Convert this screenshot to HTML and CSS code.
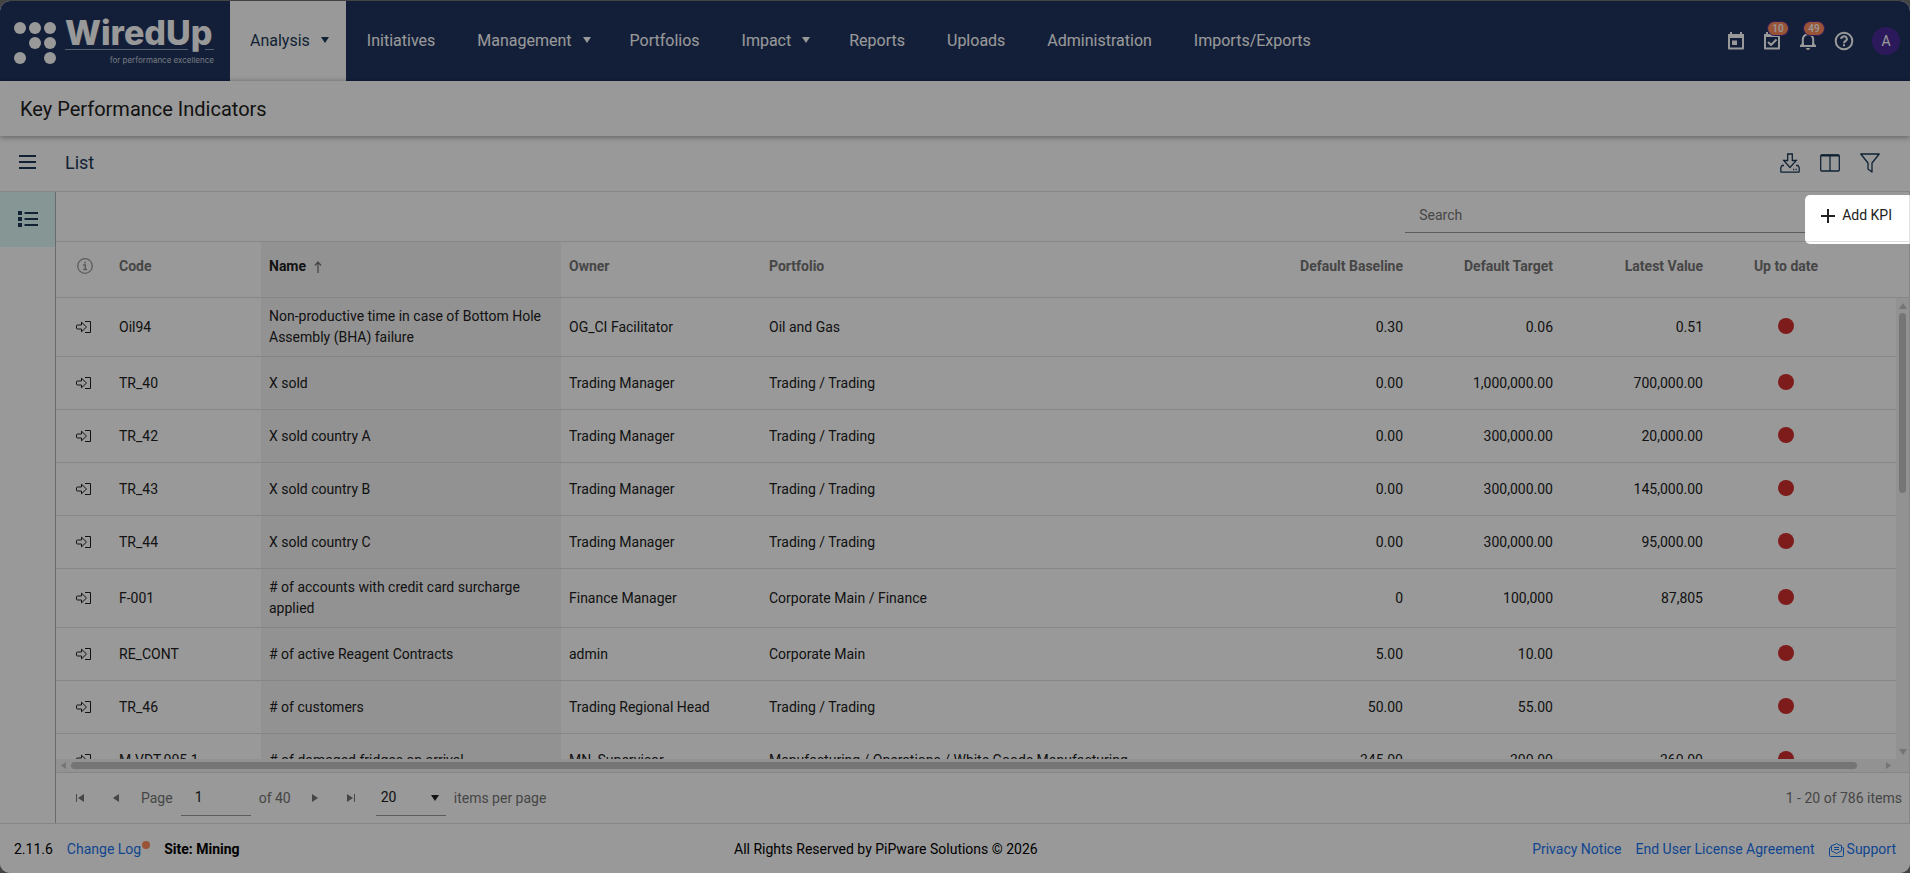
FILE: index.html
```html
<!DOCTYPE html>
<html lang="en">
  <head>
    <meta charset="UTF-8" />
    <meta name="viewport" content="width=device-width, initial-scale=1.0" />
    <title>Key Performance Indicators</title>
    <link rel="stylesheet" href="styles.css">
  </head>
  <body>
    <svg class="sprite" width="0" height="0">
      <symbol id="open" viewBox="0 0 16 14">
        <path d="M1.5 5h4V2.200L10.500 7l-5 4.800V9h-4a1 1 0 0 1-1-1V6a1 1 0 0 1 1-1zM9 1.500h5.500v11H9" fill="none" stroke="currentColor" stroke-width="1" />
      </symbol>
      <symbol id="caret" viewBox="0 0 8 6">
        <path d="M0 0h8L4 6z" fill="currentColor" />
      </symbol>
    </svg>

    <div class="app">
      <header class="topbar">
        <a class="logo" href="#" aria-label="WiredUp">
          <svg class="logo-dots" width="42" height="42" viewBox="0 0 42 42" fill="#fff">
            <circle cx="6" cy="6" r="6" /><circle cx="21" cy="6" r="6" /><circle cx="36" cy="6" r="6" />
            <circle cx="21" cy="21" r="6" /><circle cx="36" cy="21" r="6" />
            <circle cx="6" cy="36" r="6" /><circle cx="36" cy="36" r="6" />
          </svg>
          <span class="logo-text">
            <span class="logo-name">WiredUp</span>
            <span class="logo-rule"><i></i><i></i></span>
            <span class="logo-tag">for performance excellence</span>
          </span>
        </a>
        <nav class="menu">
          <a class="drop active" href="#">Analysis<svg class="caret"><use href="#caret" /></svg></a>
          <a href="#">Initiatives</a>
          <a class="drop" href="#">Management<svg class="caret"><use href="#caret" /></svg></a>
          <a href="#">Portfolios</a>
          <a class="drop" href="#">Impact<svg class="caret"><use href="#caret" /></svg></a>
          <a href="#">Reports</a>
          <a href="#">Uploads</a>
          <a href="#">Administration</a>
          <a href="#">Imports/Exports</a>
        </nav>
        <div class="user-tools">
          <button aria-label="Calendar">
            <svg width="18" height="20" viewBox="0 0 18 20"><path d="M2 4h14v13.500H2z" fill="none" stroke="currentColor" stroke-width="2" stroke-linejoin="round" /><path d="M1 3h16v4H1zM3 1h2v3H3zM13 1h2v3h-2zM5 9.500h5v4.500H5z" fill="currentColor" /></svg>
          </button>
          <button aria-label="Tasks">
            <svg width="18" height="20" viewBox="0 0 18 20"><path d="M2 4h14v13.500H2zM5 11l3 3 5.500-5.500" fill="none" stroke="currentColor" stroke-width="2" stroke-linejoin="round" /><path d="M1 3h16v3H1zM3 1h2v3H3zM13 1h2v3h-2z" fill="currentColor" /></svg>
            <span class="badge">10</span>
          </button>
          <button aria-label="Notifications">
            <svg width="18" height="20" viewBox="0 0 18 20"><path d="M1 15h16M3.800 15V8.500a5.200 5.200 0 0 1 10.400 0V15" fill="none" stroke="currentColor" stroke-width="2" /><path d="M1 16v-1.500L3.500 12h11l2.500 2.500V16zM7 17h4a2 2 0 0 1-4 0z" fill="currentColor" /><path d="M5 8.500h8V14H5z" fill="#20355f" /></svg>
            <span class="badge">49</span>
          </button>
          <button aria-label="Help">
            <svg width="20" height="20" viewBox="0 0 20 20" fill="none" stroke="currentColor" stroke-width="2"><circle cx="10" cy="10" r="8.300" /><path d="M7.200 8a2.800 2.500 0 1 1 4.300 2c-1 .700-1.500 1-1.500 2.200M10 13.300v2" /></svg>
          </button>
          <button class="avatar">A</button>
        </div>
      </header>

      <div class="page-title"><h1>Key Performance Indicators</h1></div>

      <div class="toolbar">
        <button class="menu-btn" aria-label="Menu">
          <svg width="18" height="16" viewBox="0 0 18 16"><path d="M0 1h17M0 7h17M0 13h17" stroke="currentColor" stroke-width="2" /></svg>
        </button>
        <h2>List</h2>
        <div class="toolbar-icons">
          <button aria-label="Export">
            <svg width="20" height="20" viewBox="0 0 20 20" fill="none" stroke="currentColor" stroke-width="1.300"><path d="M7.700 1h4.600v6.500h4L10 14.500 3.700 7.500h4zM4 12.500H2l-1.200 2.200v3.800a.700.700 0 0 0 .700.700h17a.700.700 0 0 0 .700-.700v-3.800L18 12.500h-2" /><path d="M13 16.500h1.200M15.500 16.500h1.200" /></svg>
          </button>
          <button aria-label="Columns">
            <svg width="20" height="20" viewBox="0 0 20 20" fill="none" stroke="currentColor" stroke-width="1.300"><rect x=".7" y="2" width="18.600" height="16" rx="1" /><path d="M10 2v16" /><path d="M1 2.600h18" stroke-width="2" /></svg>
          </button>
          <button aria-label="Filter">
            <svg width="20" height="20" viewBox="0 0 20 20" fill="none" stroke="currentColor" stroke-width="1.300"><path d="M.8 1h18.400L12 10v9l-4-3v-6z" stroke-linejoin="round" /></svg>
          </button>
        </div>
      </div>

      <div class="main">
        <aside class="sidebar">
          <button class="side-item" aria-label="List">
            <svg width="20" height="18" viewBox="0 0 20 18"><path d="M6.500 3H20M6.500 9H20M6.500 15H20" stroke="currentColor" stroke-width="2" /><path d="M0 1h4v4H0zM0 7h4v4H0zM0 13h4v4H0z" fill="currentColor" /></svg>
          </button>
        </aside>

        <section class="grid">
          <div class="grid-tools">
            <input class="search" type="text" placeholder="Search" aria-label="Search" />
            <div class="add-wrap">
              <button class="add-btn">
                <svg width="14" height="14" viewBox="0 0 14 14"><path d="M7 0v14M0 7h14" stroke="currentColor" stroke-width="2" /></svg>
                Add KPI
              </button>
              <div class="spotlight"></div>
            </div>
          </div>

          <div class="grid-content">
            <div class="viewport">
              <table>
                <colgroup>
                  <col class="c-icon" /><col class="c-code" /><col class="c-name" /><col class="c-owner" /><col class="c-portfolio" />
                  <col class="c-num" /><col class="c-num" /><col class="c-num" /><col class="c-status" /><col />
                </colgroup>
                <thead>
                  <tr>
                    <th class="icon">
                      <svg width="16" height="16" viewBox="0 0 16 16" fill="none" stroke="#9a9a9a"><circle cx="8" cy="8" r="7.300" stroke-width="1.300" /><path d="M6 7h2.300v4.500M6 11.500h4.200M8 3.800v1.700" stroke-width="1.500" /></svg>
                    </th>
                    <th>Code</th>
                    <th class="sorted">Name<svg class="sort" width="8" height="12" viewBox="0 0 8 12"><path d="M4 12V1M1 4.500l3-3.500 3 3.500" fill="none" stroke="#757575" stroke-width="1.300" /></svg></th>
                    <th>Owner</th>
                    <th>Portfolio</th>
                    <th class="num">Default Baseline</th>
                    <th class="num">Default Target</th>
                    <th class="num">Latest Value</th>
                    <th class="status">Up to date</th>
                    <th></th>
                  </tr>
                </thead>
                <tbody>
                  <tr>
                    <td class="icon"><svg><use href="#open" /></svg></td>
                    <td>Oil94</td>
                    <td class="sorted">Non-productive time in case of Bottom Hole Assembly (BHA) failure</td>
                    <td>OG_CI Facilitator</td>
                    <td>Oil and Gas</td>
                    <td class="num">0.30</td>
                    <td class="num">0.06</td>
                    <td class="num">0.51</td>
                    <td class="status"><span class="dot"></span></td>
                    <td></td>
                  </tr>
                  <tr>
                    <td class="icon"><svg><use href="#open" /></svg></td>
                    <td>TR_40</td>
                    <td class="sorted">X sold</td>
                    <td>Trading Manager</td>
                    <td>Trading / Trading</td>
                    <td class="num">0.00</td>
                    <td class="num">1,000,000.00</td>
                    <td class="num">700,000.00</td>
                    <td class="status"><span class="dot"></span></td>
                    <td></td>
                  </tr>
                  <tr>
                    <td class="icon"><svg><use href="#open" /></svg></td>
                    <td>TR_42</td>
                    <td class="sorted">X sold country A</td>
                    <td>Trading Manager</td>
                    <td>Trading / Trading</td>
                    <td class="num">0.00</td>
                    <td class="num">300,000.00</td>
                    <td class="num">20,000.00</td>
                    <td class="status"><span class="dot"></span></td>
                    <td></td>
                  </tr>
                  <tr>
                    <td class="icon"><svg><use href="#open" /></svg></td>
                    <td>TR_43</td>
                    <td class="sorted">X sold country B</td>
                    <td>Trading Manager</td>
                    <td>Trading / Trading</td>
                    <td class="num">0.00</td>
                    <td class="num">300,000.00</td>
                    <td class="num">145,000.00</td>
                    <td class="status"><span class="dot"></span></td>
                    <td></td>
                  </tr>
                  <tr>
                    <td class="icon"><svg><use href="#open" /></svg></td>
                    <td>TR_44</td>
                    <td class="sorted">X sold country C</td>
                    <td>Trading Manager</td>
                    <td>Trading / Trading</td>
                    <td class="num">0.00</td>
                    <td class="num">300,000.00</td>
                    <td class="num">95,000.00</td>
                    <td class="status"><span class="dot"></span></td>
                    <td></td>
                  </tr>
                  <tr>
                    <td class="icon"><svg><use href="#open" /></svg></td>
                    <td>F-001</td>
                    <td class="sorted"># of accounts with credit card surcharge applied</td>
                    <td>Finance Manager</td>
                    <td>Corporate Main / Finance</td>
                    <td class="num">0</td>
                    <td class="num">100,000</td>
                    <td class="num">87,805</td>
                    <td class="status"><span class="dot"></span></td>
                    <td></td>
                  </tr>
                  <tr>
                    <td class="icon"><svg><use href="#open" /></svg></td>
                    <td>RE_CONT</td>
                    <td class="sorted"># of active Reagent Contracts</td>
                    <td>admin</td>
                    <td>Corporate Main</td>
                    <td class="num">5.00</td>
                    <td class="num">10.00</td>
                    <td class="num"></td>
                    <td class="status"><span class="dot"></span></td>
                    <td></td>
                  </tr>
                  <tr>
                    <td class="icon"><svg><use href="#open" /></svg></td>
                    <td>TR_46</td>
                    <td class="sorted"># of customers</td>
                    <td>Trading Regional Head</td>
                    <td>Trading / Trading</td>
                    <td class="num">50.00</td>
                    <td class="num">55.00</td>
                    <td class="num"></td>
                    <td class="status"><span class="dot"></span></td>
                    <td></td>
                  </tr>
                  <tr>
                    <td class="icon"><svg><use href="#open" /></svg></td>
                    <td>M-VDT.005.1</td>
                    <td class="sorted"># of damaged fridges on arrival</td>
                    <td>MN_Supervisor</td>
                    <td>Manufacturing / Operations / White Goods Manufacturing</td>
                    <td class="num">345.00</td>
                    <td class="num">300.00</td>
                    <td class="num">360.00</td>
                    <td class="status"><span class="dot"></span></td>
                    <td></td>
                  </tr>
                </tbody>
              </table>
            </div>
            <div class="scroll-y">
              <div class="scroll-head"></div>
              <div class="track-y">
                <svg width="8" height="6" viewBox="0 0 8 6"><path d="M4 0l4 6H0z" fill="#c4c4c4" /></svg>
                <span class="thumb-y"></span>
                <svg width="8" height="6"><use href="#caret" /></svg>
              </div>
            </div>
          </div>
          <div class="scroll-x">
            <svg width="5" height="7" viewBox="0 0 5 7"><path d="M5 0v7L0 3.500z" fill="#c4c4c4" /></svg>
            <span class="thumb-x"></span>
            <svg width="5" height="7" viewBox="0 0 5 7"><path d="M0 0v7l5-3.500z" fill="#c4c4c4" /></svg>
          </div>

          <div class="pager">
            <button aria-label="First page"><svg width="8" height="8" viewBox="0 0 8 8"><path d="M0 0h1v8H0zM8 0v8L2 4z" fill="currentColor" /></svg></button>
            <button aria-label="Previous page"><svg width="8" height="8" viewBox="0 0 8 8"><path d="M7 0v8L1 4z" fill="currentColor" /></svg></button>
            <label for="page">Page</label>
            <input id="page" class="page-input" type="text" value="1" />
            <span>of 40</span>
            <button aria-label="Next page"><svg width="8" height="8" viewBox="0 0 8 8"><path d="M1 0v8l6-4z" fill="currentColor" /></svg></button>
            <button aria-label="Last page"><svg width="8" height="8" viewBox="0 0 8 8"><path d="M7 0h1v8H7zM0 0v8l6-4z" fill="currentColor" /></svg></button>
            <div class="select-wrap">
              <select id="size">
                <option>20</option>
                <option>50</option>
                <option>100</option>
              </select>
              <svg class="caret"><use href="#caret" /></svg>
            </div>
            <label for="size">items per page</label>
            <span class="total">1 - 20 of 786 items</span>
          </div>
        </section>
      </div>

      <footer class="footer">
        <div class="foot-left">
          <span>2.11.6</span>
          <a class="changelog" href="#">Change Log<span class="new-dot"></span></a>
          <b>Site: Mining</b>
        </div>
        <div>All Rights Reserved by PiPware Solutions © 2026</div>
        <div class="foot-right">
          <a href="#">Privacy Notice</a>
          <a href="#">End User License Agreement</a>
          <a class="support" href="#">
            <svg width="15" height="14" viewBox="0 0 15 14" fill="none" stroke="currentColor"><path d="M.5 5v7.500a1 1 0 0 0 1 1h12a1 1 0 0 0 1-1V5L12.500 3.500v4.300l-5 2.700-5-2.700V3.500zM2.500 3.500v-1L5 2l2.500-1.500L10 2l2.500.5v1M5 4.500h5M5 6.500h5" /></svg>
            Support
          </a>
        </div>
      </footer>
    </div>
  </body>
</html>
```
FILE: styles.css
```css
* {
  box-sizing: border-box;
}
html,
body {
  height: 100%;
  margin: 0;
  padding: 0;
}

body {
  padding-top: 1px;
  overflow: hidden;
  background: #444;
  color: #212121;
  font-family: Roboto, "Liberation Sans", sans-serif;
  font-size: 14px;
  line-height: 21px;
}

h1,
h2 {
  margin: 0;
  font-weight: 400;
}
a {
  color: #1a75f0;
  text-decoration: none;
}
button,
input,
select {
  font: inherit;
  color: inherit;
  margin: 0;
  padding: 0;
  border: 0;
  background: none;
}
svg {
  display: block;
  flex: none;
}
.sprite {
  position: absolute;
}
.caret {
  width: 8px;
  height: 6px;
}

.app {
  position: relative;
  display: flex;
  flex-direction: column;
  height: 100%;
  overflow: hidden;
  background: #fff;
  border-radius: 10px;
}

/* top bar */
.topbar {
  display: flex;
  flex: none;
  height: 80px;
  background: #20355f;
  color: #fff;
}
.logo {
  display: flex;
  width: 230px;
  padding: 16px 0 0 14px;
  color: #fff;
}
.logo-dots {
  margin-top: 5px;
}
.logo-text {
  display: flex;
  flex-direction: column;
  width: 149px;
  margin-left: 9px;
}
.logo-name {
  font-family: Inter, sans-serif;
  font-size: 34px;
  font-weight: 800;
  line-height: 32px;
}
.logo-rule {
  display: flex;
  justify-content: space-between;
}
.logo-rule i {
  width: 9px;
  height: 1px;
  background: #8fa0b8;
}
.logo-rule i:first-child {
  width: 123px;
}
.logo-tag {
  align-self: flex-end;
  margin-top: 4px;
  font-family: Inter, sans-serif;
  font-size: 8px;
  line-height: 12px;
  color: #c3cad6;
}

.menu {
  display: flex;
  font-size: 16px;
}
.menu a {
  display: flex;
  align-items: center;
  padding: 0 21px 2px;
  color: #fff;
}
.menu .drop {
  padding-right: 18px;
}
.menu .caret {
  margin-left: 11px;
}
.menu .active {
  padding: 0 17px 2px 20px;
  background: #fff;
  color: #1b3a57;
}

.user-tools {
  display: flex;
  align-items: center;
  gap: 16px;
  margin-left: auto;
  padding-right: 10px;
}
.user-tools button {
  position: relative;
  display: flex;
  justify-content: center;
  width: 20px;
}
.badge {
  position: absolute;
  left: 5px;
  top: -10px;
  min-width: 22px;
  height: 15px;
  border: 1px solid #492b99;
  border-radius: 8px;
  background: #ff8c5c;
  font-size: 10px;
  font-weight: 500;
  line-height: 13px;
  text-align: center;
}
.user-tools .avatar {
  align-items: center;
  width: 28px;
  height: 28px;
  margin-left: 2px;
  border-radius: 50%;
  background: #492b99;
}

/* title and toolbar */
.page-title {
  position: relative;
  flex: none;
  height: 55px;
  padding-left: 20px;
  box-shadow: 0 1px 6px rgba(0, 0, 0, 0.4);
}
.page-title h1 {
  font-size: 20px;
  line-height: 57px;
}
.toolbar {
  display: flex;
  flex: none;
  align-items: center;
  height: 56px;
  padding-right: 30px;
  padding-bottom: 2px;
  border-bottom: 1px solid #e0e0e0;
  color: #1b3a57;
}
.toolbar h2 {
  font-size: 18px;
}
.menu-btn {
  width: 65px;
  padding-left: 19px;
}
.toolbar-icons {
  display: flex;
  gap: 20px;
  margin-left: auto;
}

/* main area */
.main {
  display: flex;
  flex: 1;
  min-height: 0;
}
.sidebar {
  width: 56px;
  border-right: 1px solid #b3b3b3;
}
.side-item {
  display: flex;
  align-items: center;
  justify-content: center;
  width: 55px;
  height: 55px;
  padding-bottom: 2px;
  background: #e0fbf9;
  color: #1b3a57;
}
.grid {
  display: flex;
  flex: 1;
  flex-direction: column;
  min-width: 0;
  border-right: 1px solid #e0e0e0;
}
.grid-tools {
  display: flex;
  flex: none;
  align-items: center;
  justify-content: flex-end;
  height: 50px;
  padding-bottom: 2px;
  border-bottom: 1px solid #e0e0e0;
}
.search {
  width: 400px;
  height: 35px;
  padding: 0 14px;
  border-bottom: 1px solid #9a9a9a;
}
.search::placeholder {
  color: #757575;
  opacity: 1;
}
.add-wrap {
  position: relative;
}
.add-btn {
  display: flex;
  align-items: center;
  gap: 7px;
  height: 35px;
  padding: 0 17px 0 16px;
}
/* dims everything except the add button */
.spotlight {
  position: absolute;
  z-index: 10;
  top: -3px;
  right: -1px;
  bottom: -11px;
  left: 0;
  border-radius: 5px 0 0 5px;
  box-shadow: 0 0 0 9999px rgba(0, 0, 0, 0.4);
  pointer-events: none;
}

/* table */
.grid-content {
  display: flex;
  flex: 1;
  min-height: 0;
}
.viewport {
  flex: 1;
  overflow: hidden;
}
table {
  width: 100%;
  min-width: 1840px;
  table-layout: fixed;
  border-collapse: separate;
  border-spacing: 0;
}
.c-icon {
  width: 55px;
}
.c-code,
.c-num,
.c-status {
  width: 150px;
}
.c-name {
  width: 300px;
}
.c-owner {
  width: 200px;
}
.c-portfolio {
  width: 500px;
}
th,
td {
  padding: 8px;
  border-bottom: 1px solid #e0e0e0;
  text-align: left;
}
th {
  height: 56px;
  padding: 0 8px 7px;
  color: #757575;
  font-weight: 700;
}
td {
  height: 53px;
}
.sorted {
  background: #f3f3f3;
}
th.sorted {
  color: #212121;
}
.sort {
  display: inline-block;
  margin-left: 8px;
  vertical-align: -2px;
}
.icon {
  padding-left: 20px;
}
th.icon {
  padding-left: 21px;
}
td.icon svg {
  width: 16px;
  height: 14px;
}
.num {
  text-align: right;
}
.status {
  text-align: center;
}
.dot {
  display: block;
  width: 16px;
  height: 16px;
  margin: 0 auto 3px;
  border-radius: 50%;
  background: #d32f2f;
}

/* scrollbars */
.scroll-y {
  display: flex;
  flex-direction: column;
  width: 13px;
}
.scroll-head {
  height: 56px;
  border-bottom: 1px solid #e0e0e0;
}
.track-y {
  display: flex;
  flex: 1;
  flex-direction: column;
  align-items: center;
  justify-content: space-between;
  padding: 5px 0 4px;
  background: #f3f3f3;
  color: #c4c4c4;
}
.thumb-y {
  width: 7px;
  height: 180px;
  margin: 4px 0 auto;
  border-radius: 4px;
  background: #c4c4c4;
}
.scroll-x {
  display: flex;
  flex: none;
  align-items: center;
  height: 13px;
  padding: 0 18px 0 5px;
  background: #f3f3f3;
}
.thumb-x {
  flex: 1;
  height: 7px;
  margin: 0 29px 0 5px;
  border-radius: 4px;
  background: #c4c4c4;
}

/* pager */
.pager {
  display: flex;
  flex: none;
  align-items: center;
  height: 51px;
  padding: 0 7px 0 6px;
  border-top: 1px solid #e0e0e0;
  color: #757575;
}
.pager button {
  display: flex;
  align-items: center;
  justify-content: center;
  width: 36px;
  height: 36px;
}
.pager button + button {
  margin-right: 7px;
}
.page-input {
  width: 70px;
  height: 36px;
  margin: 0 8px;
  padding: 0 14px 1px;
  border-bottom: 1px solid #9a9a9a;
  color: #212121;
}
.pager span + button {
  margin-left: 6px;
}
.select-wrap {
  position: relative;
  margin-right: 8px;
  color: #212121;
}
.select-wrap select {
  display: block;
  width: 70px;
  height: 36px;
  padding: 0 5px 1px;
  border-bottom: 1px solid #9a9a9a;
  appearance: none;
}
.select-wrap .caret {
  position: absolute;
  top: 15px;
  right: 7px;
}
.total {
  margin-left: auto;
}

/* footer */
.footer {
  display: flex;
  flex: none;
  align-items: center;
  justify-content: space-between;
  height: 50px;
  padding: 2px 14px 0;
  border-top: 1px solid #e0e0e0;
  color: #000;
}
.foot-left,
.foot-right {
  display: flex;
  gap: 14px;
}
.changelog {
  display: flex;
}
.new-dot {
  width: 8px;
  height: 8px;
  margin: 2px 0 0 1px;
  border-radius: 50%;
  background: #ff8c5c;
}
.support {
  display: flex;
  align-items: center;
  gap: 3px;
}
```
